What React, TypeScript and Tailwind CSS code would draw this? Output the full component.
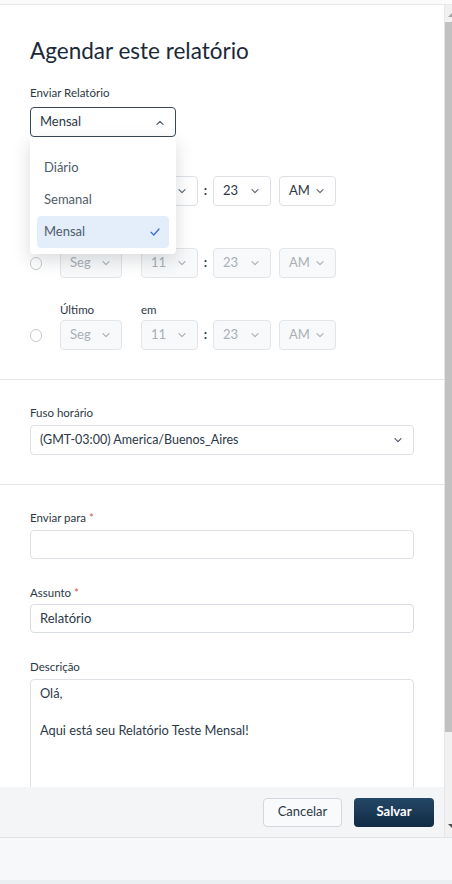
import React from 'react';

function Chevron({ up = false, className = '' }: { up?: boolean; className?: string }) {
  return (
    <svg width="8" height="5" viewBox="0 0 8 5" className={className}>
      <path
        d={up ? 'M1 4.3 L4 1.3 L7 4.3' : 'M1 0.7 L4 3.7 L7 0.7'}
        fill="none"
        stroke="currentColor"
        strokeWidth="1.2"
        strokeLinecap="round"
        strokeLinejoin="round"
      />
    </svg>
  );
}

function Label({ children, required = false }: { children: React.ReactNode; required?: boolean }) {
  return (
    <div className="h-[16px] text-[11.5px] leading-[16px] text-[#2b3845]">
      {children}
      {required && <span className="ml-[3px] text-[#e0574f]">*</span>}
    </div>
  );
}

function SmallSelect({ value, width, disabled }: { value: string; width: string; disabled: boolean }) {
  return (
    <div
      className={`${width} h-[30px] flex items-center justify-between pl-[9px] pr-[11px] rounded-[4px] border text-[13px] ${
        disabled
          ? 'bg-[#f8f9fa] border-[#e2e5e9] text-[#a7afb8]'
          : 'bg-white border-[#dde1e6] text-[#2b3846]'
      }`}
    >
      <span>{value}</span>
      <Chevron className={disabled ? 'text-[#aab2ba]' : 'text-[#5e6b78]'} />
    </div>
  );
}

function Radio({ checked }: { checked: boolean }) {
  return (
    <div className="w-[12px] h-[30px] flex items-center">
      <div
        className={`w-[13px] h-[13px] rounded-full border bg-white flex items-center justify-center ${
          checked ? 'border-[#1f3b57]' : 'border-[#c6cbd0]'
        }`}
      >
        {checked && <div className="w-[7px] h-[7px] rounded-full bg-[#1f3b57]" />}
      </div>
    </div>
  );
}

// rows 1 and 2 sit under the open menu, so their labels are left empty
function ScheduleRow({
  first,
  second,
  day,
  checked,
}: {
  first: string;
  second: string;
  day: string;
  checked: boolean;
}) {
  const disabled = !checked;
  return (
    <div>
      <div className="flex h-[16px] mb-[2px] text-[11.5px] leading-[16px] text-[#2b3845]">
        <span className="ml-[30px] w-[81px]">{first}</span>
        <span>{second}</span>
      </div>
      <div className="flex items-center">
        <Radio checked={checked} />
        <div className="ml-[18px]">
          <SmallSelect value={day} width="w-[62px]" disabled={disabled} />
        </div>
        <div className="ml-[19px]">
          <SmallSelect value="11" width="w-[57px]" disabled={disabled} />
        </div>
        <div className="w-[15px] text-center text-[13px] font-bold text-[#333d47]">:</div>
        <SmallSelect value="23" width="w-[58px]" disabled={disabled} />
        <div className="ml-[8px]">
          <SmallSelect value="AM" width="w-[57px]" disabled={disabled} />
        </div>
      </div>
    </div>
  );
}

function FrequencySelect() {
  const options = ['Diário', 'Semanal', 'Mensal'];
  return (
    <div className="relative w-[146px]">
      <div className="h-[30px] flex items-center justify-between pl-[9px] pr-[11px] rounded-[4px] border border-[#3b4957] bg-white text-[13px] text-[#2b3846]">
        <span>Mensal</span>
        <Chevron up className="text-[#4f5c69]" />
      </div>
      <div className="absolute left-0 top-full z-10 w-full bg-white rounded-b-[4px] shadow-[0_6px_18px_rgba(20,30,45,0.16)] pt-[15px] pb-[6px] px-[7px]">
        {options.map((o) => {
          const selected = o === 'Mensal';
          return (
            <div
              key={o}
              className={`h-[32px] flex items-center justify-between pl-[7px] pr-[9px] rounded-[4px] text-[13px] text-[#4f5c69] ${
                selected ? 'bg-[#e3eefa]' : ''
              }`}
            >
              <span>{o}</span>
              {selected && (
                <svg width="10" height="8" viewBox="0 0 10 8">
                  <path
                    d="M1 4.2 L3.8 7 L9 1"
                    fill="none"
                    stroke="#3f6fd6"
                    strokeWidth="1.3"
                    strokeLinecap="round"
                    strokeLinejoin="round"
                  />
                </svg>
              )}
            </div>
          );
        })}
      </div>
    </div>
  );
}

function Scrollbar() {
  return (
    <div className="w-[8px] flex flex-col bg-[#f1f1f1] border-l border-[#e6e6e6] overflow-hidden">
      <div className="h-[17px] relative">
        <svg width="8" height="5" viewBox="0 0 8 5" className="absolute left-[3px] top-[7px]">
          <path d="M0 5 L4 1 L8 5 Z" fill="#a3a3a3" />
        </svg>
      </div>
      <div className="h-[710px] bg-[#c1c1c1]" />
      <div className="flex-1 relative">
        <svg width="8" height="5" viewBox="0 0 8 5" className="absolute left-[3px] bottom-[8px]">
          <path d="M0 0 L4 4 L8 0 Z" fill="#505050" />
        </svg>
      </div>
    </div>
  );
}

export default function App() {
  return (
    <div className="w-[452px] h-[884px] flex flex-col bg-white overflow-hidden font-['Lato',sans-serif]">
      <div className="h-[5px] bg-[#fbfbfc] border-b border-[#e4e7eb]" />
      <div className="flex h-[832px]">
        <div className="w-[444px] flex flex-col">
          <div className="h-[782px] overflow-hidden">
            <section className="px-[30px] pt-[32px] pb-[29px]">
              <h1 className="text-[22.5px] leading-[28px] text-[#1a2938]">Agendar este relatório</h1>
              <div className="mt-[20px]">
                <Label>Enviar Relatório</Label>
                <div className="mt-[6px]">
                  <FrequencySelect />
                </div>
              </div>
              <div className="mt-[21px] flex flex-col gap-[24px]">
                <ScheduleRow first="" second="" day="" checked />
                <ScheduleRow first="" second="" day="Seg" checked={false} />
                <ScheduleRow first="Último" second="em" day="Seg" checked={false} />
              </div>
            </section>

            <section className="border-t border-[#e1e4e8] px-[30px] pt-[25px] pb-[29px]">
              <Label>Fuso horário</Label>
              <div className="mt-[4px] h-[30px] flex items-center justify-between pl-[9px] pr-[11px] rounded-[4px] border border-[#dde1e6] text-[12.5px] text-[#2b3846]">
                <span>(GMT-03:00) America/Buenos_Aires</span>
                <Chevron className="text-[#4f5c69]" />
              </div>
            </section>

            <section className="border-t border-[#e1e4e8] px-[30px] pt-[25px]">
              <Label required>Enviar para</Label>
              <div className="mt-[4px] h-[29px] rounded-[4px] border border-[#dde1e6]" />

              <div className="mt-[26px]">
                <Label required>Assunto</Label>
              </div>
              <div className="mt-[3px] h-[29px] flex items-center pl-[9px] rounded-[4px] border border-[#d8dde3] text-[13px] text-[#2b3846]">
                Relatório
              </div>

              <div className="mt-[26px]">
                <Label>Descrição</Label>
              </div>
              <div className="mt-[4px] h-[140px] rounded-[4px] border border-[#dde1e6] pl-[9px] pt-[4px] text-[12.8px] leading-[18.5px] text-[#2b3846]">
                <p>Olá,</p>
                <p>&nbsp;</p>
                <p>Aqui está seu Relatório Teste Mensal!</p>
              </div>
            </section>
          </div>

          <footer className="h-[50px] bg-[#f4f5f7] flex items-center justify-end gap-[12px] pr-[10px]">
            <button className="w-[79px] h-[29px] rounded-[4px] border border-[#d3d8de] bg-[#f9fafb] text-[13px] text-[#2b3846]">
              Cancelar
            </button>
            <button className="w-[80px] h-[29px] rounded-[4px] bg-gradient-to-b from-[#254868] to-[#102b44] text-[13px] font-bold text-white">
              Salvar
            </button>
          </footer>
        </div>
        <Scrollbar />
      </div>
      <div className="flex-1 bg-[#f7f8f9] border-t border-[#e1e4e7] border-b-[4px] border-b-[#eceff2]" />
    </div>
  );
}
